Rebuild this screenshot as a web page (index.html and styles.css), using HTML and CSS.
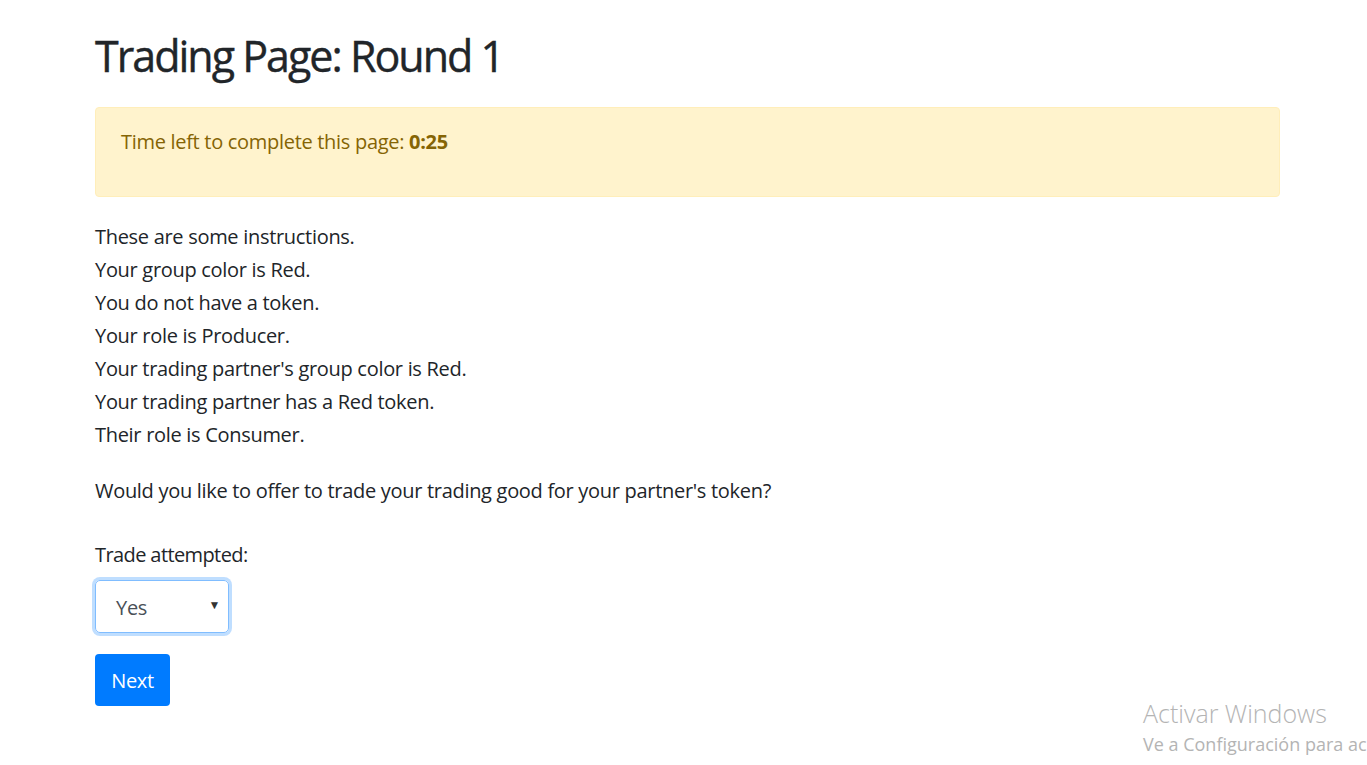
FILE: index.html
```html
<!DOCTYPE html>
<html>
<head>
<meta charset="utf-8">
<link rel="stylesheet" href="styles.css">
</head>
<body>
<div class="container">
  <h1 class="title">Trading Page: Round 1</h1>
  <div class="alert">Time left to complete this page: <b>0:25</b></div>
  <div class="instructions">
    <div>These are some instructions.</div>
    <div>Your group color is Red.</div>
    <div>You do not have a token.</div>
    <div>Your role is Producer.</div>
    <div>Your trading partner's group color is Red.</div>
    <div>Your trading partner has a Red token.</div>
    <div>Their role is Consumer.</div>
  </div>
  <p class="question">Would you like to offer to trade your trading good for your partner's token?</p>
  <div class="field">
    <label class="label">Trade attempted:</label>
    <div class="select">
      <span class="select-value">Yes</span>
      <span class="select-arrow">▼</span>
    </div>
  </div>
  <button class="btn">Next</button>
</div>
<div class="watermark">
  <div class="wm-title">Activar Windows</div>
  <div class="wm-sub">Ve a Configuración para ac</div>
</div>
</body>
</html>
```
FILE: styles.css
```css
html, body {
  margin: 0;
  padding: 0;
  background: #fff;
  overflow: hidden;
}
body {
  font-family: "Open Sans", sans-serif;
  color: #212529;
  width: 1367px;
  height: 765px;
  position: relative;
}
.container {
  padding: 0 87px 0 95px;
  display: flex;
  flex-direction: column;
  align-items: flex-start;
  letter-spacing: -0.3px;
}
.title {
  margin: 26px 0 0;
  font-weight: 500;
  font-size: 43px;
  line-height: 60px;
  letter-spacing: -2px;
  -webkit-text-stroke: 0.4px #212529;
}
.alert {
  align-self: stretch;
  margin-top: 21px;
  height: 90px;
  box-sizing: border-box;
  background: #fff3cd;
  border: 1px solid #ffeeba;
  border-radius: 4px;
  color: #856404;
  font-size: 20px;
  line-height: 33px;
  padding: 17px 25px;
}
.alert b { font-weight: 700; }
.instructions {
  margin-top: 23px;
  font-size: 20px;
  line-height: 33px;
}
.question {
  margin: 23px 0 0;
  font-size: 20px;
  line-height: 33px;
}
.field {
  margin-top: 31px;
  font-size: 20px;
  line-height: 33px;
}
.label { display: block; letter-spacing: -0.6px; }
.select {
  margin-top: 9px;
  width: 134px;
  height: 53px;
  box-sizing: border-box;
  border: 1px solid #80bdff;
  border-radius: 5px;
  box-shadow: 0 0 0 3px rgba(0,123,255,.25);
  display: flex;
  align-items: center;
  justify-content: space-between;
  padding: 2px 8px 0 20px;
  color: #495057;
}
.select-arrow {
  font-size: 12px;
  color: #333;
  margin-top: -6px;
}
.btn {
  margin-top: 21px;
  width: 75px;
  height: 52px;
  border: 0;
  border-radius: 4px;
  background: #007bff;
  color: #fff;
  font-family: inherit;
  font-size: 20px;
  letter-spacing: -0.3px;
  padding: 0;
}
.watermark {
  position: absolute;
  left: 1143px;
  top: 697px;
  white-space: nowrap;
  color: #b4b4b4;
}
.wm-title { font-size: 25px; line-height: 32px; font-weight: 300; }
.wm-sub { font-size: 18px; line-height: 30px; }
```
